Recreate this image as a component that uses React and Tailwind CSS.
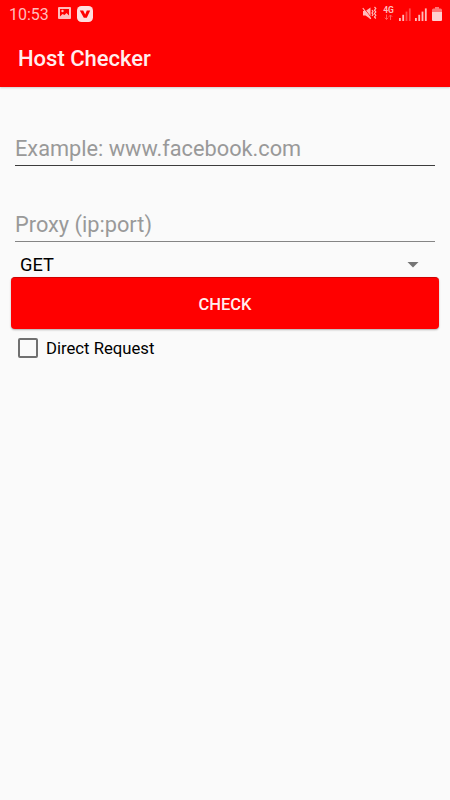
import React from "react";

const App = () => {
  return (
    <div className="flex h-screen flex-col overflow-hidden bg-[#fafafa] font-['Roboto',sans-serif] text-black">
      <div className="z-10 bg-[#ff0000] shadow-[0_1px_2px_rgba(0,0,0,0.18)]">
        <StatusBar />
        {/* App bar */}
        <header className="flex h-[59px] items-center px-[18px] pt-[2px]">
          <h1 className="text-[22px] leading-none font-medium text-[#ffeeee]">Host Checker</h1>
        </header>
      </div>

      {/* Form */}
      <main className="flex flex-col px-[11px] pt-[42px]">
        <Field placeholder="Example: www.facebook.com" line="border-[#3c3c3c]" />
        <Field placeholder="Proxy (ip:port)" line="border-[#858585]" className="mt-[39px]" />

        <button className="flex h-[35px] items-center justify-between pt-[11px] pr-[20px] pl-[9px]">
          <span className="text-[18.3px] leading-none">GET</span>
          <svg width="12" height="6" viewBox="0 0 12 6" fill="#757575">
            <path d="M0.5 0h11L6 5.6z" />
          </svg>
        </button>

        <button className="flex h-[52px] items-center justify-center rounded-[4px] border-t border-[#d00000] bg-[#ff0000] pt-[3px] text-[16.5px] font-medium text-[#ffeeee] shadow-[0_1px_2px_rgba(0,0,0,0.3)]">
          CHECK
        </button>

        <label className="mt-[7px] flex items-center pl-[7px]">
          <span className="size-[20px] rounded-[2px] border-2 border-[#707070]" />
          <span className="ml-[8px] pt-[3px] text-[16.7px] leading-[20px]">Direct Request</span>
        </label>
      </main>
    </div>
  );
};

const Field = ({ placeholder, line, className = "" }) => (
  <div className={`mx-[4px] flex h-[37px] items-start border-b ${line} ${className}`}>
    <input
      className="h-[37px] w-full bg-transparent pt-[2px] text-[21.75px] outline-none placeholder:text-[#999999]"
      placeholder={placeholder}
    />
  </div>
);

const StatusBar = () => (
  <div className="flex h-[28px] items-center justify-between pr-[8px] pl-[9px] text-[#ffbcbc]">
    <div className="flex items-center">
      <span className="pt-px text-[16px] leading-none">10:53</span>
      {/* Gallery notification */}
      <svg className="mb-[2px] ml-[9px]" width="13" height="12" viewBox="0 0 13 12">
        <rect width="13" height="12" rx="1" fill="currentColor" />
        <path d="M2 2h9v6.500L8.500 6 6.500 8 4.500 7 2 9.500z" fill="#ff0000" />
        <circle cx="4.500" cy="4" r="1.200" fill="currentColor" />
      </svg>
      <svg className="mb-px ml-[6px]" width="16" height="16" viewBox="0 0 16 16">
        <rect width="16" height="16" rx="4.500" fill="#ffdede" />
        <path d="M2.800 4.500h3.400l2 4 1.600-4h3.400L9.800 11.800H6.800z" fill="#ff0000" />
      </svg>
    </div>

    <div className="flex items-center">
      {/* Muted with vibration */}
      <svg className="mb-[2px]" width="15" height="14" viewBox="0 0 15 14">
        <path d="M1 5h2.500L8.500 1.500v11.500L3.500 9.500H1z" fill="currentColor" />
        <path d="M1.500 1.500L9.500 12" stroke="#ff0000" strokeWidth="0.800" />
        <path d="M0.800 2L8.800 12.800" stroke="currentColor" strokeWidth="1.200" />
        <path
          d="M10 4l1 1.500-1 1.500 1 1.500-1 1.500M12.500 1l1.300 1.500-1.300 1.700 1.300 1.700-1.300 1.700 1.300 1.700-1.300 1.700 1.300 1.500"
          stroke="currentColor"
          strokeWidth="1.200"
          fill="none"
        />
      </svg>
      <div className="mb-[2px] ml-[6px] flex w-[11px] flex-col items-center">
        <span className="text-[8.5px] leading-[8px] font-bold">4G</span>
        <svg width="9" height="6" viewBox="0 0 9 6" fill="none" stroke="currentColor" opacity="0.5">
          <path d="M2.500 0.500v5M0.800 3.700l1.700 1.800L4.200 3.700M6.500 6V1M4.800 2.800L6.500 1l1.700 1.800" />
        </svg>
      </div>
      <Signal className="ml-[5px]" bars={2} />
      <Signal className="ml-[4px]" bars={4} />
      {/* Battery */}
      <svg className="ml-[5px]" width="10" height="14" viewBox="0 0 10 14">
        <path d="M3 0h4v1.500h1.500q1.500 0 1.500 1.500v9.500q0 1.500-1.500 1.500h-7Q0 14 0 12.500V3q0-1.500 1.500-1.500H3z" fill="#ff7777" />
        <path d="M0 5h10v7.500q0 1.500-1.500 1.500h-7Q0 14 0 12.500z" fill="#ffd0d0" />
      </svg>
    </div>
  </div>
);

const Signal = ({ bars, className }) => (
  <svg className={className} width="12" height="13" viewBox="0 0 12 13" fill="currentColor">
    {[0, 1, 2, 3].map((i) => (
      <rect
        key={i}
        x={i * 3.3}
        y={10 - i * 3.2}
        width="1.8"
        height={3 + i * 3.2}
        opacity={i < bars ? 1 : 0.4}
      />
    ))}
  </svg>
);

export default App;
